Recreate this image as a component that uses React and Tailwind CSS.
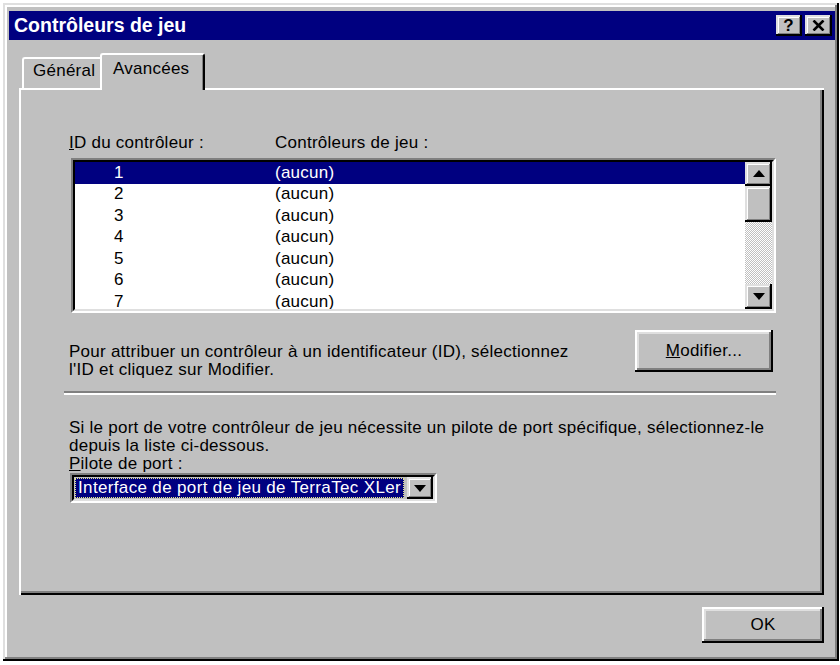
import React from "react";

const raised =
  "shadow-[inset_-2px_-2px_0_#000,inset_2px_2px_0_#fff,inset_-4px_-4px_0_#808080,inset_4px_4px_0_#dfdfdf]";
const smallRaised =
  "shadow-[inset_-2px_-2px_0_#000,inset_2px_2px_0_#dfdfdf,inset_-3px_-3px_0_#808080,inset_3px_3px_0_#fff]";

function UpArrow() {
  return (
    <svg width="12" height="7" viewBox="0 0 12 7">
      <polygon points="6,0 12,7 0,7" fill="#000" />
    </svg>
  );
}
function DownArrow() {
  return (
    <svg width="12" height="7" viewBox="0 0 12 7">
      <polygon points="0,0 12,0 6,7" fill="#000" />
    </svg>
  );
}

function Sunken({ className, children }) {
  return (
    <div className={"border-2 border-t-[#808080] border-l-[#808080] border-b-white border-r-white " + className}>
      <div className="w-full h-full border-2 border-t-black border-l-black border-b-[#dfdfdf] border-r-[#dfdfdf] bg-white flex overflow-hidden">
        {children}
      </div>
    </div>
  );
}

export default function App() {
  const rows = [1, 2, 3, 4, 5, 6, 7];
  return (
    <div className="w-[840px] h-[665px] bg-white pt-[3px] pl-[3px] font-['Liberation_Sans',Arial,sans-serif] text-[17px] leading-[18px] tracking-[0.25px] text-black">
      <div className="w-[836px] h-[658px] bg-[#c0c0c0] flex flex-col pt-[8px] pl-[6px] pr-[4px] shadow-[inset_-2px_-2px_0_#000,inset_2px_2px_0_#dfdfdf,inset_-4px_-4px_0_#808080,inset_4px_4px_0_#fff]">
        {/* Title bar */}
        <div className="h-[29px] shrink-0 bg-[#000080] flex items-center pl-[5px] pr-[3px]">
          <span className="text-white font-bold text-[19.5px] tracking-normal leading-none">
            Contrôleurs de jeu
          </span>
          <div className="ml-auto flex gap-[3px]">
            <div className={"w-[26px] h-[21px] bg-[#c0c0c0] flex items-center justify-center " + smallRaised}>
              <span className="font-bold text-[17px] leading-none tracking-normal pb-[1px] pr-[1px]">?</span>
            </div>
            <div className={"w-[27px] h-[21px] bg-[#c0c0c0] flex items-center justify-center " + smallRaised}>
              <svg width="13" height="11" viewBox="0 0 13 11">
                <path d="M1.5 0.5 L11.5 10.5 M11.5 0.5 L1.5 10.5" stroke="#000" strokeWidth="2.6" />
              </svg>
            </div>
          </div>
        </div>

        {/* Body */}
        <div className="flex flex-col ml-[10px] mr-[11px]">
          {/* Tabs */}
          <div className="mt-[13px] h-[35px] flex items-end pl-[3px]">
            <div className="w-[78px] h-[31px] border-l-2 border-t-2 border-white rounded-tl-[3px] pl-[9px] pt-[3px]">
              Général
            </div>
            <div className="relative z-10 w-[105px] h-[37px] -mb-[2px] bg-[#c0c0c0] border-l-2 border-t-2 border-white border-r-2 border-r-black rounded-tl-[3px] rounded-tr-[3px] shadow-[inset_-1px_0_0_#808080] pl-[11px] pt-[5px]">
              Avancées
            </div>
          </div>

          {/* Panel */}
          <div className="h-[507px] flex flex-col pl-[50px] pr-[48px] pt-[46px] shadow-[inset_2px_2px_0_#fff,inset_-2px_-2px_0_#000,inset_-4px_-4px_0_#808080]">
            <div className="flex whitespace-nowrap">
              <div className="w-[206px]">
                <u>I</u>D du contrôleur :
              </div>
              <div>Contrôleurs de jeu :</div>
            </div>

            {/* List */}
            <Sunken className="ml-[2px] mt-[6px] w-[705px] h-[155px] shrink-0">
              <div className="flex-1 flex flex-col">
                {rows.map((r) => (
                  <div
                    key={r}
                    className={
                      "h-[21.5px] shrink-0 flex items-center whitespace-nowrap pl-[39px] " +
                      (r === 1 ? "bg-[#000080] text-white" : "")
                    }
                  >
                    <div className="w-[161px]">{r}</div>
                    <div>(aucun)</div>
                  </div>
                ))}
              </div>
              <div className="w-[27px] shrink-0 flex flex-col">
                <div className={"h-[24px] bg-[#c0c0c0] flex items-center justify-center pb-[2px] " + smallRaised}>
                  <UpArrow />
                </div>
                <div className={"h-[36px] bg-[#c0c0c0] " + smallRaised}></div>
                <div className="flex-1 bg-[image:repeating-conic-gradient(#fff_0_25%,#c0c0c0_0_50%)] bg-[length:2px_2px]"></div>
                <div className={"h-[25px] bg-[#c0c0c0] flex items-center justify-center pb-[1px] " + smallRaised}>
                  <DownArrow />
                </div>
              </div>
            </Sunken>

            {/* Description + Modifier */}
            <div className="mt-[17px] h-[42px] shrink-0 flex justify-between items-start">
              <div className="pt-[13px] whitespace-nowrap">
                <div>Pour attribuer un contrôleur à un identificateur (ID), sélectionnez</div>
                <div>l'ID et cliquez sur Modifier.</div>
              </div>
              <div className={"w-[138px] h-[42px] mr-[3px] bg-[#c0c0c0] flex items-center justify-center " + raised}>
                <span>
                  <u>M</u>odifier...
                </span>
              </div>
            </div>

            {/* Separator */}
            <div className="mt-[19px] -ml-[5px] h-[4px] shrink-0 border-t-2 border-t-[#808080] border-b-2 border-b-white"></div>

            <div className="mt-[24px] whitespace-nowrap">
              <div>Si le port de votre contrôleur de jeu nécessite un pilote de port spécifique, sélectionnez-le</div>
              <div>depuis la liste ci-dessous.</div>
              <div>
                <u>P</u>ilote de port :
              </div>
            </div>

            {/* Combo */}
            <Sunken className="ml-[1px] mt-0 w-[367px] h-[30px] shrink-0">
              <div className="flex-1 min-w-0 flex items-stretch bg-[#c0c0c0]">
                <div className="flex-1 min-w-0 m-[1px] mr-[3px] bg-[#000080] border border-dotted border-[#e8e880] text-white flex items-center pl-[2px] overflow-hidden whitespace-nowrap tracking-[0.35px]">
                  Interface de port de jeu de TerraTec XLer
                </div>
                <div className={"w-[26px] shrink-0 bg-[#c0c0c0] flex items-center justify-center " + smallRaised}>
                  <DownArrow />
                </div>
              </div>
            </Sunken>
          </div>

          {/* OK */}
          <div className="mt-[12px] flex justify-end">
            <div className={"w-[122px] h-[36px] bg-[#c0c0c0] flex items-center justify-center " + raised}>
              OK
            </div>
          </div>
        </div>
      </div>
    </div>
  );
}
